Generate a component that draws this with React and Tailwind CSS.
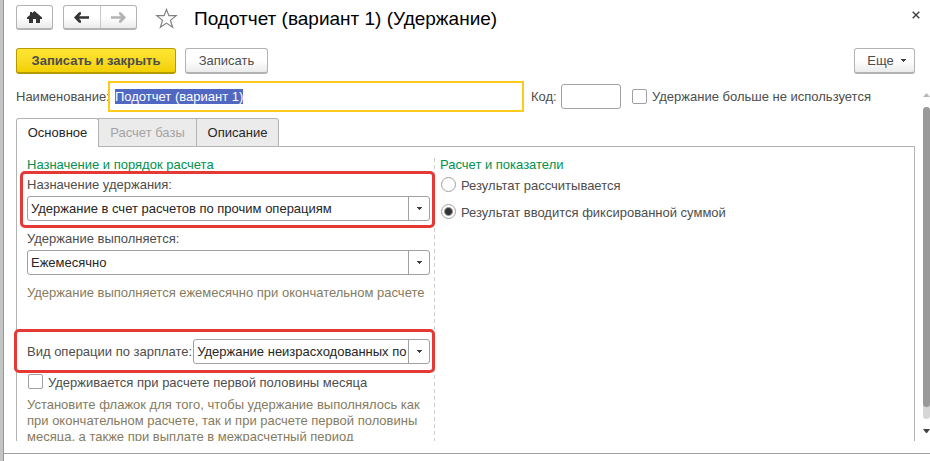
import { useEffect, useRef } from "react";

const BUTTON =
  "rounded-[3px] border border-[#b3b3b3] border-b-2 bg-linear-to-b from-white from-50% to-[#ebebeb] text-[#4d4d4d]";
const CHECKBOX =
  "size-[15px] shrink-0 appearance-none rounded-[2px] border border-[#a0a0a0] bg-white checked:bg-[#4d4d4d]";
const RADIO =
  "size-[15px] shrink-0 appearance-none rounded-full border border-[#a0a0a0] bg-white checked:bg-[radial-gradient(circle,#333_0_3px,#fff_5px)]";

function Caret() {
  return (
    <svg width="5" height="3" viewBox="0 0 5 3" fill="#404040" shapeRendering="crispEdges" aria-hidden="true">
      <path d="M0 0h5v1H4v1H3v1H2V2H1V1H0z" />
    </svg>
  );
}

function SelectField({ id, options, className = "" }) {
  return (
    <div className={`relative min-w-0 ${className}`}>
      <select
        id={id}
        className="block h-[25px] w-full appearance-none overflow-hidden rounded-[3px] border border-[#a0a0a0] bg-white pl-[3px] pr-[21px] text-[#262626] outline-none"
      >
        {options.map((option) => (
          <option key={option}>{option}</option>
        ))}
      </select>
      <span className="pointer-events-none absolute inset-y-0 right-0 flex w-[22px] items-center justify-center border-l border-[#a0a0a0]">
        <Caret />
      </span>
    </div>
  );
}

function Header() {
  return (
    <header className="flex items-start">
      <button type="button" aria-label="Домой" className={`${BUTTON} mt-[5px] flex h-[25px] w-[37px] items-center justify-center`}>
        <svg width="15" height="12" viewBox="0 0 15 12" fill="#333" aria-hidden="true">
          <path d="M7.500 0 15 6.500V8h-2v4H9V8H6v4H2V8H0V6.500L3 3.900V1h2v1.200z" />
        </svg>
      </button>
      <div className={`${BUTTON} ml-[10px] mt-[5px] flex h-[25px] w-[74px]`}>
        <button type="button" aria-label="Назад" className="flex flex-1 items-center justify-center border-r border-[#c8c8c8]">
          <svg width="15" height="11" viewBox="0 0 15 11" fill="#333" aria-hidden="true">
            <path d="M0 5.500 5 .3h2v1.900L5 4.200h10v2.600H5l2 2v1.900H5z" />
          </svg>
        </button>
        <button type="button" aria-label="Вперед" disabled className="flex flex-1 items-center justify-center">
          <svg width="15" height="11" viewBox="0 0 15 11" fill="#b3b3b3" aria-hidden="true">
            <path d="M15 5.500 10 .3H8v1.900l2 2H0v2.600h10l-2 2v1.900h2z" />
          </svg>
        </button>
      </div>
      <button type="button" aria-label="В избранное" className="ml-[18px] mt-[7px]">
        <svg className="block" width="23" height="22" viewBox="0 0 23 22" fill="none" stroke="#808080" strokeWidth="1.200" aria-hidden="true">
          <path d="m11.500 2.500 2.400 6.200h7.300l-5.700 4.700 2.100 6.800-6.100-4.100-6.100 4.100 2.100-6.800-5.700-4.700h7.300z" />
        </svg>
      </button>
      <h1 className="ml-4 mt-[7px] flex-1 text-[19px] leading-6 text-black">Подотчет (вариант 1) (Удержание)</h1>
      <button type="button" aria-label="Закрыть" className="mt-[11px]">
        <svg className="block" width="8" height="8" viewBox="0 0 8 8" fill="none" stroke="#404040" strokeWidth="1.400" aria-hidden="true">
          <path d="m.7.7 6.600 6.600M7.300.7.7 7.300" />
        </svg>
      </button>
    </header>
  );
}

function Purpose() {
  return (
    <section className="pt-[10px]">
      <h2 className="text-[#00914d]">Назначение и порядок расчета</h2>
      <div className="relative mt-1">
        <label htmlFor="purpose" className="block">Назначение удержания:</label>
        <SelectField id="purpose" className="mt-[3px]" options={["Удержание в счет расчетов по прочим операциям"]} />
        <span className="pointer-events-none absolute -bottom-[7px] -left-[7px] -right-[5px] -top-[6px] rounded-[5px] border-3 border-[#e53935]" />
      </div>
      <label htmlFor="period" className="mt-[10px] block">Удержание выполняется:</label>
      <SelectField id="period" className="mt-[3px]" options={["Ежемесячно"]} />
      <p className="mt-[10px] text-[#857b5e]">Удержание выполняется ежемесячно при окончательном расчете</p>
      <div className="relative mt-[38px] flex items-center gap-px">
        <label htmlFor="operation" className="shrink-0">Вид операции по зарплате:</label>
        <SelectField id="operation" className="flex-1" options={["Удержание неизрасходованных по"]} />
        <span className="pointer-events-none absolute -bottom-[9px] -left-[13px] -right-[5px] -top-[10px] rounded-[5px] border-3 border-[#e53935]" />
      </div>
      <label className="mt-[10px] flex gap-[5px] pl-px">
        <input type="checkbox" className={CHECKBOX} />
        <span className="pt-px">Удерживается при расчете первой половины месяца</span>
      </label>
      <p className="mt-[6px] text-[#857b5e]">
        Установите флажок для того, чтобы удержание выполнялось как при окончательном расчете, так и при расчете первой половины месяца, а также при выплате в межрасчетный период
      </p>
    </section>
  );
}

function Calculation() {
  return (
    <section className="flex">
      <span className="mt-2 w-px shrink-0 self-stretch bg-[repeating-linear-gradient(to_bottom,transparent_0_3px,#ccc_3px_7px)]" />
      <div className="pl-[5px] pt-[10px]">
        <h2 className="text-[#00914d]">Расчет и показатели</h2>
        <label className="mt-1 flex gap-[5px] pl-px">
          <input type="radio" name="result" className={RADIO} />
          <span className="pt-px">Результат рассчитывается</span>
        </label>
        <label className="mt-[10px] flex gap-[5px] pl-px">
          <input type="radio" name="result" defaultChecked className={RADIO} />
          <span className="pt-px">Результат вводится фиксированной суммой</span>
        </label>
      </div>
    </section>
  );
}

function ScrollTrack() {
  return (
    <div className="flex w-[7px] shrink-0 flex-col items-center pb-2 pt-[63px]">
      <svg className="shrink-0" width="7" height="4" viewBox="0 0 7 4" fill="#b8b8b8" aria-hidden="true">
        <path d="M3.500 0 7 4H0z" />
      </svg>
      <div className="mt-[10px] flex w-full flex-1 flex-col rounded-full bg-[#d6d6d6]">
        <div className="h-[96%] w-full rounded-full bg-[#999]" />
      </div>
      <svg className="mt-[10px] shrink-0" width="7" height="4" viewBox="0 0 7 4" fill="#404040" aria-hidden="true">
        <path d="M0 0h7L4 4H3z" />
      </svg>
    </div>
  );
}

export default function App() {
  const nameRef = useRef(null);

  useEffect(() => {
    nameRef.current.focus();
    nameRef.current.select();
  }, []);

  return (
    <div className="flex h-screen border-l-3 border-[#c4c4c4] bg-white font-['Liberation_Sans',Arial,sans-serif] text-[13px] leading-4 text-[#4d4d4d]">
      <div className="flex min-w-0 flex-1 flex-col border-l border-[#999]">
        <div className="h-[30px] shrink-0 pl-3 pr-[10px]">
          <Header />
        </div>
        <div className="flex min-h-0 flex-1">
          <main className="flex min-w-0 flex-1 flex-col overflow-hidden pl-3 pr-2">
            <div className="mt-[18px] flex gap-[9px]">
              <button type="button" className="h-[26px] w-40 rounded-[3px] border border-b-2 border-[#b39b00] bg-linear-to-b from-[#ffe633] to-[#f2d000] font-bold">
                Записать и закрыть
              </button>
              <button type="button" className={`${BUTTON} h-[26px] w-[83px]`}>Записать</button>
              <button type="button" className={`${BUTTON} ml-auto flex h-[26px] w-[61px] items-center justify-center gap-[7px] pl-1`}>
                Еще
                <Caret />
              </button>
            </div>
            <div className="mt-[7px] flex items-center">
              <label htmlFor="name" className="w-[92px] shrink-0">Наименование:</label>
              <input
                id="name"
                ref={nameRef}
                defaultValue="Подотчет (вариант 1)"
                className="h-[31px] w-[416px] min-w-0 border-2 border-[#fccb1c] px-[5px] text-[#262626] outline-none selection:bg-[#5068c2] selection:text-white"
              />
              <label htmlFor="code" className="ml-[7px] w-[30px] shrink-0">Код:</label>
              <input id="code" className="h-[25px] w-[60px] rounded-[3px] border border-[#a0a0a0] px-1 outline-none" />
              <label className="ml-[11px] flex shrink-0 items-center gap-[5px]">
                <input type="checkbox" className={CHECKBOX} />
                <span>Удержание больше не используется</span>
              </label>
            </div>
            <div role="tablist" className="relative z-10 mt-[6px] flex text-[#262626]">
              <button type="button" role="tab" aria-selected="true" className="h-[29px] w-[83px] rounded-t-[3px] border border-b-0 border-[#b3b3b3] bg-white">Основное</button>
              <button type="button" role="tab" disabled className="-ml-px h-[29px] w-[99px] border border-[#b3b3b3] bg-[#ebebeb] text-[#a3a3a3]">Расчет базы</button>
              <button type="button" role="tab" className="-ml-px h-[29px] w-[83px] rounded-tr-[3px] border border-[#b3b3b3] bg-[#ebebeb]">Описание</button>
            </div>
            <div role="tabpanel" className="-mt-px grid min-h-0 flex-1 grid-cols-[403fr_480fr] gap-1 border-x border-t border-[#b3b3b3] pl-[10px]">
              <Purpose />
              <Calculation />
            </div>
          </main>
          <ScrollTrack />
        </div>
        <footer className="mt-3 h-2 border-t border-[#a0a0a0]" />
      </div>
    </div>
  );
}
